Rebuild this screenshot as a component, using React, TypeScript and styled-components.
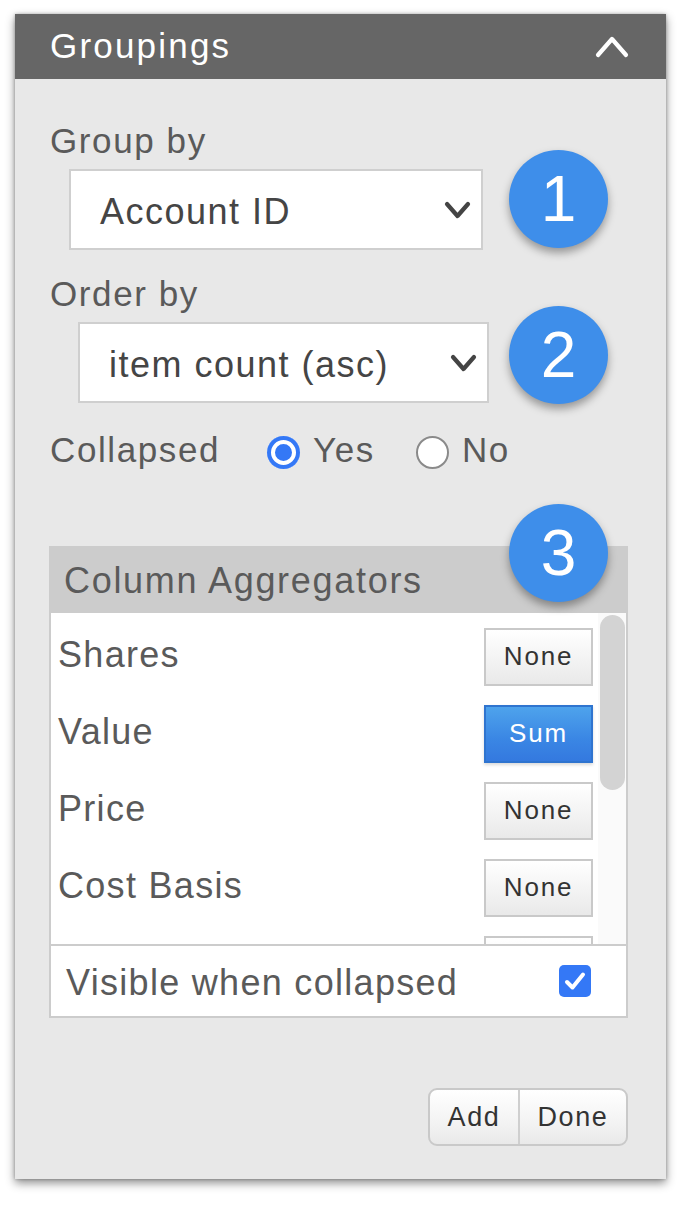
import React from "react";
import styled, { createGlobalStyle } from "styled-components";

const Global = createGlobalStyle`
  html, body { margin: 0; padding: 0; background: #ffffff; }
  body { font-family: "Liberation Sans", Arial, sans-serif; }
  * { box-sizing: border-box; }
`;

const Page = styled.div`
  padding: 14px 0 0 15px;
  width: 692px;
  height: 1208px;
`;

const Panel = styled.div`
  position: relative;
  width: 651px;
  height: 1165px;
  background: #e8e8e8;
  box-shadow: 0 4px 9px rgba(0, 0, 0, 0.45), 0 0 3px rgba(0, 0, 0, 0.25);
  display: flex;
  flex-direction: column;
`;

const Header = styled.div`
  height: 65px;
  background: #666666;
  display: flex;
  align-items: center;
  justify-content: space-between;
  padding: 0 37px 0 35px;
`;

const Title = styled.div`
  color: #ffffff;
  font-size: 35px;
  letter-spacing: 2.2px;
  line-height: 40px;
  margin-top: -1px;
`;

const Body = styled.div`
  flex: 1;
  display: flex;
  flex-direction: column;
  padding: 42px 35px 0 35px;
`;

const Label = styled.div<{ $gap?: number }>`
  color: #5a5a5a;
  font-size: 35px;
  letter-spacing: 1.6px;
  line-height: 40px;
  height: 40px;
  margin-top: ${(p) => p.$gap ?? 0}px;
`;

const SelectBox = styled.div<{ $indent: number; $width: number }>`
  margin-top: 8px;
  margin-left: ${(p) => p.$indent}px;
  width: ${(p) => p.$width}px;
  height: 81px;
  background: #ffffff;
  border: 2px solid #cfcfcf;
  display: flex;
  align-items: center;
  justify-content: space-between;
  padding: 0 10px 0 29px;
`;

const SelectText = styled.span`
  color: #454545;
  font-size: 36px;
  letter-spacing: 1.5px;
  line-height: 40px;
  margin-top: 4px;
`;

const RadioRow = styled.div`
  margin-top: 27px;
  height: 40px;
  display: flex;
  align-items: center;
`;

const RadioLabel = styled.span`
  color: #5a5a5a;
  font-size: 35px;
  letter-spacing: 1.6px;
  line-height: 40px;
`;

const RadioCircle = styled.span<{ $on?: boolean; $ml: number }>`
  margin-left: ${(p) => p.$ml}px;
  margin-right: 13px;
  width: 33px;
  height: 33px;
  border-radius: 50%;
  flex: none;
  margin-top: 4px;
  background: ${(p) => (p.$on ? "#3478f6" : "#ffffff")};
  border: ${(p) => (p.$on ? "none" : "2px solid #8a8a8a")};
  box-shadow: ${(p) => (p.$on ? "inset 0 0 0 4px #3478f6, inset 0 0 0 8px #ffffff" : "none")};
`;

const AggBox = styled.div`
  margin-top: 76px;
  margin-left: -1px;
  width: 579px;
  border: 2px solid #cccccc;
  background: #ffffff;
  display: flex;
  flex-direction: column;
`;

const AggHeader = styled.div`
  height: 65px;
  background: #cccccc;
  color: #5a5a5a;
  font-size: 36px;
  letter-spacing: 1.7px;
  display: flex;
  align-items: center;
  padding-left: 13px;
`;

const ListArea = styled.div`
  height: 333px;
  display: flex;
  border-bottom: 2px solid #cccccc;
`;

const Rows = styled.div`
  flex: 1;
  overflow: hidden;
  padding-top: 5px;
`;

const Row = styled.div`
  height: 77px;
  display: flex;
  align-items: center;
  justify-content: space-between;
  padding: 0 5px 0 7px;
`;

const RowLabel = styled.span<{ $shift?: number }>`
  color: #5a5a5a;
  font-size: 36px;
  letter-spacing: 1.3px;
  line-height: 40px;
  margin-top: ${(p) => p.$shift ?? -3}px;
`;

const AggButton = styled.div<{ $active?: boolean }>`
  width: 109px;
  height: 58px;
  display: flex;
  align-items: center;
  justify-content: center;
  font-size: 26px;
  letter-spacing: 1.8px;
  color: ${(p) => (p.$active ? "#ffffff" : "#333333")};
  border: 2px solid ${(p) => (p.$active ? "#2f74cf" : "#c9c9c9")};
  background: ${(p) =>
    p.$active
      ? "linear-gradient(#4ea3ec, #3a86e4 60%, #3479df)"
      : "linear-gradient(#ffffff, #f2f2f2 60%, #e9e9e9)"};
  box-shadow: ${(p) => (p.$active ? "0 2px 3px rgba(0,0,0,0.15)" : "none")};
`;

const ScrollTrack = styled.div`
  width: 28px;
  padding: 2px 1px 0 2px;
  background: #fafafa;
`;

const ScrollThumb = styled.div`
  height: 175px;
  border-radius: 13px;
  background: #d3d3d3;
`;

const FooterRow = styled.div`
  height: 70px;
  display: flex;
  align-items: center;
  justify-content: space-between;
  padding: 0 35px 0 15px;
`;

const CheckBox = styled.span`
  width: 32px;
  height: 32px;
  border-radius: 5px;
  background: #3478f6;
  display: flex;
  align-items: center;
  justify-content: center;
`;

const Actions = styled.div`
  margin-top: 70px;
  align-self: flex-end;
  margin-right: 3px;
  display: flex;
  height: 58px;
  border: 2px solid #c9c9c9;
  border-radius: 9px;
  overflow: hidden;
  background: linear-gradient(#ffffff, #f3f3f3 60%, #e9e9e9);
`;

const ActionButton = styled.div<{ $w: number; $divider?: boolean }>`
  width: ${(p) => p.$w}px;
  display: flex;
  align-items: center;
  justify-content: center;
  font-size: 27px;
  letter-spacing: 1.6px;
  color: #333333;
  border-left: ${(p) => (p.$divider ? "2px solid #cfcfcf" : "none")};
`;

const Badge = styled.div<{ $top: number }>`
  position: absolute;
  left: 494px;
  top: ${(p) => p.$top}px;
  width: 99px;
  height: 98px;
  border-radius: 50%;
  background: #3e8eea;
  color: #ffffff;
  font-size: 64px;
  display: flex;
  align-items: center;
  justify-content: center;
  box-shadow: 0 5px 8px rgba(0, 0, 0, 0.35);
`;

const Chevron = ({ up, color, w, h }: { up?: boolean; color: string; w: number; h: number }) => (
  <svg width={w} height={h} viewBox={`0 0 ${w} ${h}`} fill="none">
    <polyline
      points={up ? `3,${h - 3} ${w / 2},3 ${w - 3},${h - 3}` : `3,3 ${w / 2},${h - 3} ${w - 3},3`}
      stroke={color}
      strokeWidth={4.2}
      strokeLinecap="round"
      strokeLinejoin="round"
    />
  </svg>
);

const rows = [
  { name: "Shares", agg: "None" },
  { name: "Value", agg: "Sum", active: true },
  { name: "Price", agg: "None" },
  { name: "Cost Basis", agg: "None" },
  { name: "", agg: "" },
];

export default function App() {
  return (
    <Page>
      <Global />
      <Panel>
        <Header>
          <Title>Groupings</Title>
          <Chevron up color="#ffffff" w={34} h={22} />
        </Header>
        <Body>
          <Label>Group by</Label>
          <SelectBox $indent={19} $width={414}>
            <SelectText>Account ID</SelectText>
            <Chevron color="#444444" w={27} h={18} />
          </SelectBox>
          <Label $gap={24}>Order by</Label>
          <SelectBox $indent={28} $width={411}>
            <SelectText>item count (asc)</SelectText>
            <Chevron color="#444444" w={27} h={18} />
          </SelectBox>
          <RadioRow>
            <RadioLabel>Collapsed</RadioLabel>
            <RadioCircle $on $ml={47} />
            <RadioLabel>Yes</RadioLabel>
            <RadioCircle $ml={41} />
            <RadioLabel>No</RadioLabel>
          </RadioRow>
          <AggBox>
            <AggHeader>Column Aggregators</AggHeader>
            <ListArea>
              <Rows>
                {rows.map((r, i) => (
                  <Row key={i}>
                    <RowLabel>{r.name}</RowLabel>
                    <AggButton $active={r.active}>{r.agg}</AggButton>
                  </Row>
                ))}
              </Rows>
              <ScrollTrack>
                <ScrollThumb />
              </ScrollTrack>
            </ListArea>
            <FooterRow>
              <RowLabel $shift={4}>Visible when collapsed</RowLabel>
              <CheckBox>
                <svg width="22" height="20" viewBox="0 0 22 20" fill="none">
                  <polyline points="3,11 8.5,16.5 19,3.5" stroke="#ffffff" strokeWidth="4" strokeLinecap="round" strokeLinejoin="round" />
                </svg>
              </CheckBox>
            </FooterRow>
          </AggBox>
          <Actions>
            <ActionButton $w={88}>Add</ActionButton>
            <ActionButton $w={108} $divider>
              Done
            </ActionButton>
          </Actions>
        </Body>
        <Badge $top={136}>1</Badge>
        <Badge $top={292}>2</Badge>
        <Badge $top={490}>3</Badge>
      </Panel>
    </Page>
  );
}
